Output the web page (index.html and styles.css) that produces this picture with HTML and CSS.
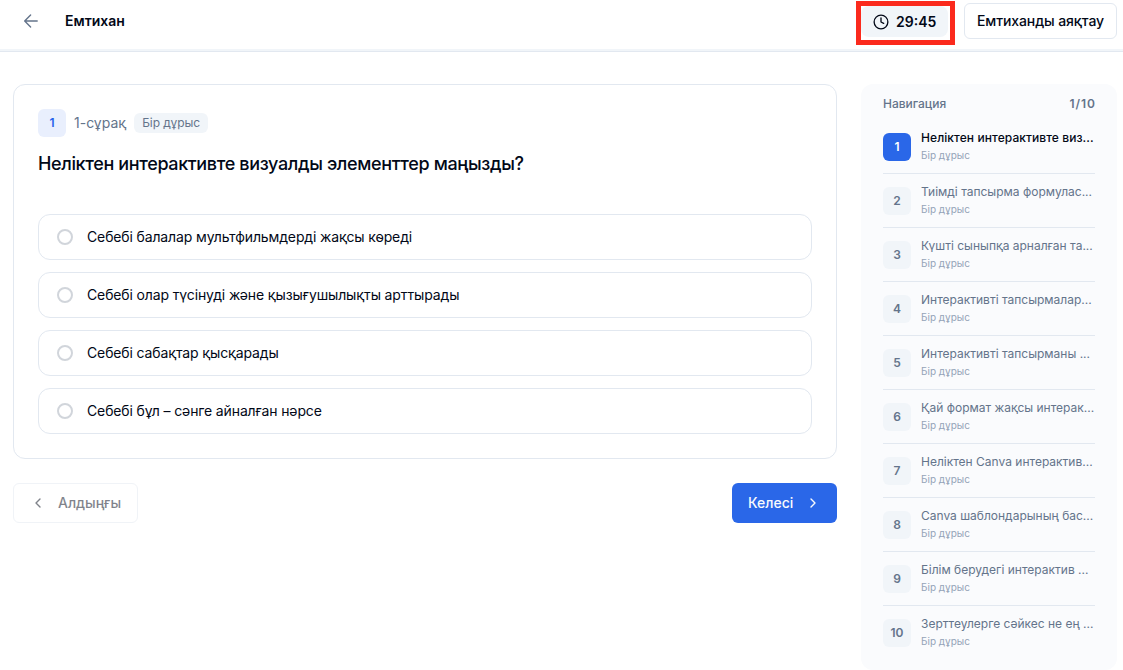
FILE: index.html
```html
<!DOCTYPE html>
<html lang="kk">
  <head>
    <meta charset="UTF-8" />
    <meta name="viewport" content="width=device-width, initial-scale=1.0" />
    <title>Емтихан</title>
    <link rel="stylesheet" href="styles.css">
  </head>
  <body>
    <header class="header">
      <a class="back" href="#">
        <svg width="16" height="16" viewBox="0 0 16 16" fill="none" stroke="currentColor" stroke-width="1.4" stroke-linecap="round" stroke-linejoin="round">
          <path d="M14.2 8H2M7.6 2L1.7 8l5.9 6" />
        </svg>
      </a>
      <h1>Емтихан</h1>
      <div class="timer-frame">
        <div class="timer">
          <svg width="16" height="16" viewBox="0 0 24 24" fill="none" stroke="currentColor" stroke-width="2" stroke-linecap="round" stroke-linejoin="round">
            <circle cx="12" cy="12" r="10.3" />
            <path d="M12 6v6l4 2" />
          </svg>
          <span>29:45</span>
        </div>
      </div>
      <button class="finish">Емтиханды аяқтау</button>
    </header>

    <main class="page">
      <section class="exam">
        <div class="card">
          <div class="meta">
            <span class="badge">1</span>
            <span class="label">1-сұрақ</span>
            <span class="tag">Бір дұрыс</span>
          </div>
          <h2>Неліктен интерактивте визуалды элементтер маңызды?</h2>
          <div class="options">
            <div class="option"><span class="radio"></span><span>Себебі балалар мультфильмдерді жақсы көреді</span></div>
            <div class="option"><span class="radio"></span><span>Себебі олар түсінуді және қызығушылықты арттырады</span></div>
            <div class="option"><span class="radio"></span><span>Себебі сабақтар қысқарады</span></div>
            <div class="option"><span class="radio"></span><span>Себебі бұл – сәнге айналған нәрсе</span></div>
          </div>
        </div>
        <div class="controls">
          <button class="btn prev" disabled>
            <svg width="16" height="16" viewBox="0 0 16 16" fill="none" stroke="currentColor" stroke-width="1.4" stroke-linecap="round" stroke-linejoin="round"><path d="M10 4L6 8l4 4" /></svg>
            <span>Алдыңғы</span>
          </button>
          <button class="btn next">
            <span>Келесі</span>
            <svg width="16" height="16" viewBox="0 0 16 16" fill="none" stroke="currentColor" stroke-width="1.4" stroke-linecap="round" stroke-linejoin="round"><path d="M6 4l4 4-4 4" /></svg>
          </button>
        </div>
      </section>

      <aside class="nav">
        <div class="nav-head">
          <span class="nav-title">Навигация</span>
          <span class="nav-count">1/10</span>
        </div>
        <ul>
          <li class="active"><span class="num">1</span><div><p>Неліктен интерактивте виз...</p><small>Бір дұрыс</small></div></li>
          <li><span class="num">2</span><div><p>Тиімді тапсырма формулас...</p><small>Бір дұрыс</small></div></li>
          <li><span class="num">3</span><div><p>Күшті сыныпқа арналған та...</p><small>Бір дұрыс</small></div></li>
          <li><span class="num">4</span><div><p>Интерактивті тапсырмалар...</p><small>Бір дұрыс</small></div></li>
          <li><span class="num">5</span><div><p>Интерактивті тапсырманы ...</p><small>Бір дұрыс</small></div></li>
          <li><span class="num">6</span><div><p>Қай формат жақсы интерак...</p><small>Бір дұрыс</small></div></li>
          <li><span class="num">7</span><div><p>Неліктен Canva интерактив...</p><small>Бір дұрыс</small></div></li>
          <li><span class="num">8</span><div><p>Canva шаблондарының бас...</p><small>Бір дұрыс</small></div></li>
          <li><span class="num">9</span><div><p>Білім берудегі интерактив ...</p><small>Бір дұрыс</small></div></li>
          <li><span class="num">10</span><div><p>Зерттеулерге сәйкес не ең ...</p><small>Бір дұрыс</small></div></li>
        </ul>
      </aside>
    </main>
  </body>
</html>
```
FILE: styles.css
```css
* {
  margin: 0;
  padding: 0;
  box-sizing: border-box;
}

body {
  font-family: Inter, "Liberation Sans", sans-serif;
  font-size: 14px;
  line-height: 20px;
  color: #020817;
  background: #fff;
  overflow: hidden;
}

button {
  font: inherit;
  font-weight: 500;
  color: inherit;
  background: #fff;
  border: 1px solid #e2e8f0;
  border-radius: 6px;
}

svg {
  display: block;
  flex-shrink: 0;
}

.header {
  display: flex;
  align-items: flex-start;
  height: 52px;
  padding: 1px 6px 0 23px;
  border-bottom: 1px solid #e2e8f0;
  box-shadow: inset 0 -2px 0 #f1f5f9;
}

.back {
  margin-top: 12px;
  color: #64748b;
}

.header h1 {
  margin: 10px auto 0 26px;
  font-size: 14px;
  font-weight: 600;
}

.timer-frame {
  width: 99px;
  height: 44px;
  padding: 0 2px 0 0;
  border: 5px solid #fb2a1d;
}

.timer {
  display: flex;
  align-items: center;
  gap: 7px;
  height: 31px;
  padding-left: 12px;
  font-weight: 600;
  background: #f1f5f9;
  border-radius: 8px;
}

.finish {
  width: 153px;
  height: 36px;
  margin: 2px 0 0 9px;
  letter-spacing: -0.1px;
  white-space: nowrap;
}

.page {
  display: grid;
  grid-template-columns: 824px 256px;
  gap: 24px;
  align-items: start;
  padding: 32px 6px 0 13px;
}

.card {
  height: 375px;
  padding: 24px;
  border: 1px solid #e2e8f0;
  border-radius: 12px;
}

.meta {
  display: flex;
  align-items: center;
  gap: 8px;
  color: #64748b;
}

.badge,
.num {
  display: flex;
  align-items: center;
  justify-content: center;
  flex-shrink: 0;
  width: 28px;
  height: 28px;
  font-size: 12px;
  font-weight: 600;
  border-radius: 6px;
}

.badge {
  color: #2563eb;
  background: #e9effd;
}

.tag {
  padding: 0 8px;
  font-size: 12px;
  letter-spacing: -0.1px;
  background: #f1f5f9;
  border-radius: 6px;
}

.card h2 {
  margin: 13px 0 36px;
  font-size: 18px;
  font-weight: 500;
  line-height: 28px;
  letter-spacing: -0.36px;
}

.options {
  display: grid;
  gap: 12px;
}

.option {
  display: flex;
  align-items: center;
  gap: 14px;
  height: 46px;
  padding: 0 18px;
  letter-spacing: -0.13px;
  border: 1px solid #e2e8f0;
  border-radius: 12px;
}

.radio {
  width: 16px;
  height: 16px;
  border: 2px solid #d1d5db;
  border-radius: 50%;
}

.controls {
  display: flex;
  justify-content: space-between;
  margin-top: 24px;
}

.btn {
  display: flex;
  align-items: center;
  gap: 12px;
  height: 40px;
  padding: 0 16px;
}

.prev {
  width: 125px;
  opacity: 0.5;
}

.next {
  width: 105px;
  color: #f8fafc;
  background: #2a67e8;
  border: none;
}

.nav {
  height: 586px;
  padding: 10px 22px 0;
  background: #fafbfd;
  border-radius: 12px;
}

.nav-head {
  display: flex;
  justify-content: space-between;
  margin-bottom: 6px;
  font-size: 12px;
  font-weight: 500;
  color: #64748b;
}

.nav-count {
  margin-right: -1px;
  font-weight: 600;
  letter-spacing: 1px;
}

.nav ul {
  list-style: none;
}

.nav li {
  display: flex;
  align-items: center;
  gap: 10px;
  height: 54px;
  color: #64748b;
  border-bottom: 1px solid #e2e8f0;
}

.nav li:last-child {
  border-bottom-color: transparent;
}

.nav li div {
  padding-bottom: 2px;
}

.nav p {
  font-size: 12px;
  line-height: 18px;
  white-space: nowrap;
}

.nav small {
  display: block;
  font-size: 10px;
  line-height: 16px;
  color: #94a3b8;
}

.num {
  background: #f1f5f9;
}

.nav .active p {
  font-weight: 500;
  letter-spacing: 0.08px;
  color: #020817;
}

.active .num {
  color: #fff;
  background: #2a67e8;
}
```
